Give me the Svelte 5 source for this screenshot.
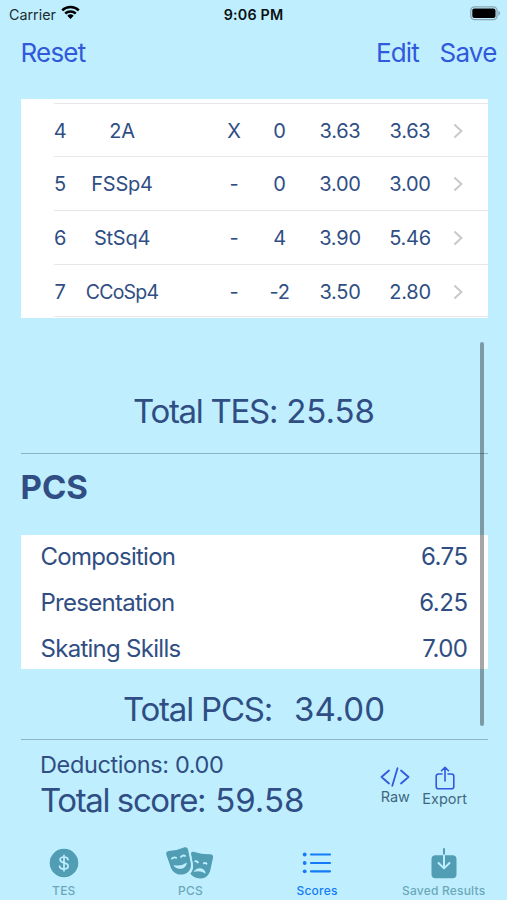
<script>
    let elements = [
        { n: 4, name: '2A', mark: 'X', goe: '0', base: '3.63', score: '3.63' },
        { n: 5, name: 'FSSp4', mark: '-', goe: '0', base: '3.00', score: '3.00' },
        { n: 6, name: 'StSq4', mark: '-', goe: '4', base: '3.90', score: '5.46' },
        { n: 7, name: 'CCoSp4', mark: '-', goe: '-2', base: '3.50', score: '2.80' }
    ]

    let components = [
        { name: 'Composition', value: '6.75' },
        { name: 'Presentation', value: '6.25' },
        { name: 'Skating Skills', value: '7.00' }
    ]

    let tabs = ['TES', 'PCS', 'Scores', 'Saved Results']
    let active = $state('Scores')
</script>

<div class="screen">
    <div class="status">
        <div class="carrier">
            <span>Carrier</span>
            <svg width="19" height="15" viewBox="0 0 19 15">
                <g fill="none" stroke="#000" stroke-width="2.5">
                    <path d="M1.2 5.4a12 12 0 0 1 16.6 0" />
                    <path d="M4.2 8.5a7.8 7.8 0 0 1 10.6 0" />
                </g>
                <path d="M9.5 14 6.3 10.8a4.7 4.7 0 0 1 6.4 0z" />
            </svg>
        </div>
        <span class="time">9:06 PM</span>
        <svg class="battery" width="31" height="15" viewBox="0 0 31 15">
            <rect x="0.8" y="0.8" width="26.2" height="12.9" rx="3.6" fill="none" stroke="#86a7b1" stroke-width="1.3" />
            <rect x="2.3" y="2.4" width="23.2" height="9.7" rx="2" />
            <path d="M28.3 4.8c2.3.8 2.3 4.1 0 4.9z" fill="#86a7b1" />
        </svg>
    </div>

    <header>
        <button class="reset">Reset</button>
        <button class="edit">Edit</button>
        <button class="save">Save</button>
    </header>

    <section class="elements">
        {#each elements as el}
            <div class="row">
                <span>{el.n}</span>
                <span class={el.name.length > 5 ? 'long' : ''}>{el.name}</span>
                <i></i>
                <span>{el.mark}</span>
                <span>{el.goe}</span>
                <span>{el.base}</span>
                <span>{el.score}</span>
                <svg width="10" height="16" viewBox="0 0 10 16">
                    <path d="M1.4 1.5 8.4 8l-7 6.5" fill="none" stroke="#c9c9cd" stroke-width="2" />
                </svg>
            </div>
        {/each}
    </section>

    <div class="total tes"><span class="label">Total TES:</span><span>25.58</span></div>

    <h2>PCS</h2>

    <section class="components">
        {#each components as c}
            <div class="component">
                <span>{c.name}</span>
                <span class="value">{c.value}</span>
            </div>
        {/each}
    </section>

    <div class="total pcs"><span class="label">Total PCS:</span><span>34.00</span></div>

    <div class="summary">
        <div class="result">
            <div class="deductions">Deductions: 0.00</div>
            <div class="score"><span class="label">Total score:</span><span>59.58</span></div>
        </div>
        <div class="actions">
            <div class="action raw">
                <svg width="30" height="22" viewBox="0 0 30 22">
                    <path d="M9 4.5 1.5 11 9 17.5M21 4.5l7.5 6.5-7.5 6.5M17.5 2.2l-5.2 17.6" fill="none" stroke="#3159dc" stroke-width="1.8" stroke-linecap="round" stroke-linejoin="round" />
                </svg>
                <span>Raw</span>
            </div>
            <div class="action export">
                <svg width="20" height="24" viewBox="0 0 20 24">
                    <path d="M7 8H3.500Q1.200 8 1.200 10.300v10.200Q1.200 22.800 3.500 22.800h13Q18.800 22.800 18.800 20.500V10.300Q18.800 8 16.500 8H13M10 15V1.500M6.500 4.700 10 1.300l3.500 3.400" fill="none" stroke="#3159dc" stroke-width="1.6" stroke-linecap="round" stroke-linejoin="round" />
                </svg>
                <span>Export</span>
            </div>
        </div>
    </div>

    <nav>
        {#each tabs as tab, i}
            <button class="tab {active == tab ? 'active' : ''}" onclick={() => (active = tab)}>
                {#if i == 0}
                    <svg width="30" height="30" viewBox="0 0 30 30">
                        <circle cx="15" cy="15" r="14.3" fill="#519db4" />
                        <path d="M19 11.600c-.3-1.700-1.800-2.600-4-2.600s-3.900 1-3.900 2.800c0 1.700 1.300 2.400 3.900 3s4.200 1.400 4.200 3.300-1.700 3-4.200 3-4.200-1-4.400-2.900M15 7.300v15.500" fill="none" stroke="#bfefff" stroke-width="1.7" stroke-linecap="round" />
                    </svg>
                {:else if i == 1}
                    <svg width="50" height="34" viewBox="0 0 50 34">
                        <path d="M28.500 5.800Q37 8.500 45.200 8.300q3.400.2 2.800 3.400l-2.700 12.600C44 30 39.200 33.500 33.500 32.300c-3.300-.7-6.500-2.300-8.300-4.900 2.300-2.300 3.200-5.500 2.300-9.800L26 8q-.2-2.800 2.500-2.200z" fill="#519db4" />
                        <path d="M3.700 5Q12 4.700 19.600 1.300q2.600-.7 3.300 1.800l2.800 13.400c1.200 5.900-1.700 10.400-7 11.800-5.600 1.300-10.700-1.400-12.800-6.600L1.200 8.300Q.7 5.500 3.700 5z" fill="#519db4" />
                        <path d="M24.700 5.500 27.200 17.600c.8 4.300-.4 7.600-3 10.100" fill="none" stroke="#bfefff" stroke-width="1.300" />
                        <path d="M6.900 12.600q1.900-2 4.200-.8M16 10.800q1.700-1.900 4-.9M30.300 15.300q1.900-.4 2.600 1.100M38.800 17.300q1.500-.9 2.700.4" fill="none" stroke="#bfefff" stroke-width="1.900" stroke-linecap="round" />
                        <path d="M8.500 19q7.300 2 13.300-2.500c-.1 3.300-2 5.600-5.400 6.200-3.500.7-6.700-.8-7.900-3.700z" fill="#bfefff" />
                        <path d="M28.500 26q2.800-4.600 7.500-3.700 4 .8 4.700 5.400-5.600-3.600-12.200-1.700z" fill="#bfefff" />
                    </svg>
                {:else if i == 2}
                    <svg width="30" height="24" viewBox="0 0 30 24">
                        <g fill="#147af5">
                            <circle cx="2.7" cy="3.5" r="1.9" />
                            <circle cx="2.7" cy="12" r="1.9" />
                            <circle cx="2.7" cy="20.3" r="1.9" />
                        </g>
                        <path d="M9 3.500h19M9 12h19M9 20.300h19" stroke="#147af5" stroke-width="2.2" stroke-linecap="round" />
                    </svg>
                {:else}
                    <svg width="26" height="32" viewBox="0 0 26 32">
                        <rect x="0.5" y="8.3" width="25" height="22.9" rx="4" fill="#519db4" />
                        <path d="M13 8V2" stroke="#519db4" stroke-width="2" stroke-linecap="round" />
                        <path d="M13 8.300v13M7.500 16l5.500 5.400 5.500-5.400" fill="none" stroke="#bfefff" stroke-width="2" stroke-linecap="round" stroke-linejoin="round" />
                    </svg>
                {/if}
                <span>{tab}</span>
            </button>
        {/each}
    </nav>

    <div class="scrollbar"></div>
</div>

<style>
    :global(body) {
        background: #bfefff;
    }

    .screen {
        position: relative;
        box-sizing: border-box;
        width: 507px;
        height: 900px;
        overflow: hidden;
        background: #bfefff;
        color: #304e83;
        font-family: Inter, "Liberation Sans", sans-serif;
        white-space: nowrap;
        display: flex;
        flex-direction: column;
    }

    .screen > * {
        flex-shrink: 0;
    }

    svg {
        display: block;
        flex-shrink: 0;
    }

    button {
        background: none;
        border: 0;
        padding: 0;
        margin: 0;
        font-family: inherit;
        cursor: pointer;
    }

    .status {
        display: grid;
        grid-template-columns: 1fr auto 1fr;
        align-items: center;
        height: 28px;
        padding: 0 6px 0 9px;
        font-size: 14.3px;
        color: #1d2c31;
    }

    .carrier {
        display: flex;
        align-items: center;
        gap: 6px;
    }

    .carrier svg {
        margin: -3px 0 0 -1px;
    }

    .time {
        margin-left: -3px;
        font-weight: 600;
        letter-spacing: 0.2px;
        color: #0a1012;
    }

    .battery {
        justify-self: end;
        margin-top: -1px;
    }

    header {
        display: flex;
        align-items: center;
        height: 49px;
        padding: 0 10.5px 0 20.5px;
        margin-bottom: 21.5px;
    }

    header button {
        color: #3159dc;
        font-size: 26px;
        letter-spacing: -0.8px;
    }

    .reset {
        margin-right: auto;
    }

    .edit {
        margin-right: 20.5px;
    }

    .elements {
        width: 467px;
        height: 219.5px;
        box-sizing: border-box;
        padding-top: 4px;
        margin-left: 20.5px;
        background: #fff;
    }

    .row {
        display: grid;
        grid-template-columns: 12px 112px 33px 46px 45px 76px 64px 31px;
        align-items: center;
        justify-items: center;
        box-sizing: border-box;
        height: 53.7px;
        margin-left: 33.5px;
        padding-top: 1.5px;
        border-top: 1px solid #e7e7e9;
        font-size: 20px;
        letter-spacing: -0.25px;
    }

    .row:last-child {
        padding-top: 3px;
        border-bottom: 1px solid #e7e7e9;
    }

    .long {
        font-size: 19.5px;
        letter-spacing: -0.8px;
    }

    .total {
        display: flex;
        justify-content: center;
        align-items: center;
        width: 467px;
        margin-left: 20.5px;
        box-sizing: border-box;
        border-bottom: 1px solid #8db5c4;
        font-size: 33px;
    }

    .label {
        margin-right: 9px;
        letter-spacing: -1.3px;
    }

    .tes {
        height: 135.5px;
        padding-top: 51px;
    }

    h2 {
        height: 81.5px;
        line-height: 67px;
        margin: 0 0 0 20.5px;
        font-size: 33px;
        font-weight: 700;
    }

    .components {
        display: flex;
        flex-direction: column;
        justify-content: center;
        width: 467px;
        height: 134px;
        box-sizing: border-box;
        margin-left: 20.5px;
        padding: 1px 20px 0;
        background: #fff;
    }

    .component {
        display: flex;
        flex-shrink: 0;
        align-items: center;
        justify-content: space-between;
        height: 46.2px;
        font-size: 24px;
        letter-spacing: -0.72px;
    }

    .value {
        letter-spacing: -0.5px;
    }

    .pcs {
        height: 71px;
        padding-top: 9px;
    }

    .pcs .label {
        margin-right: 22px;
        letter-spacing: -1.2px;
    }

    .summary {
        display: flex;
        justify-content: space-between;
        height: 98px;
        padding: 0 40px;
    }

    .deductions {
        height: 32px;
        line-height: 32px;
        margin-top: 8.7px;
        font-size: 23.5px;
        letter-spacing: -0.38px;
    }

    .score {
        height: 38px;
        line-height: 38px;
        font-size: 33px;
    }

    .score .label {
        margin-right: 10px;
        letter-spacing: -1.4px;
    }

    .actions {
        display: flex;
        gap: 12px;
    }

    .action {
        display: flex;
        flex-direction: column;
        align-items: center;
        font-size: 14.5px;
        line-height: 18px;
        color: #3f6780;
    }

    .raw {
        padding-top: 26px;
    }

    .export {
        padding-top: 25.5px;
    }

    nav {
        display: grid;
        grid-template-columns: repeat(4, 1fr);
        height: 62px;
        padding-left: 0.5px;
    }

    .tab {
        display: grid;
        grid-template-rows: 49px 8px;
        align-items: center;
        justify-items: center;
        align-content: start;
        font-size: 12px;
        font-weight: 500;
        line-height: 8px;
        letter-spacing: 0.2px;
        color: #6ba8b9;
    }

    .active {
        color: #147af5;
    }

    /* lies over the scrolled content */
    .scrollbar {
        position: absolute;
        left: 480px;
        top: 342px;
        width: 4px;
        height: 384px;
        border-radius: 2px;
        background: rgba(0, 0, 0, 0.35);
    }
</style>
